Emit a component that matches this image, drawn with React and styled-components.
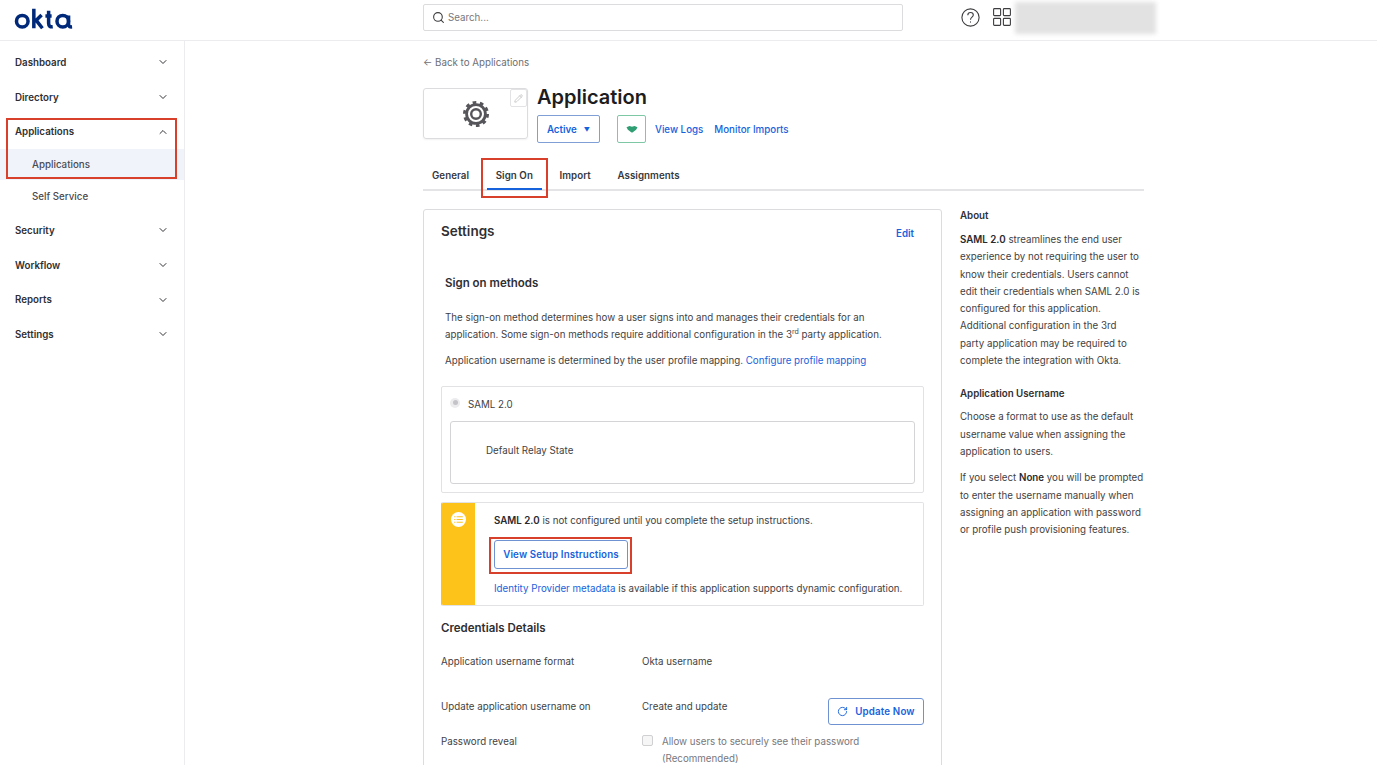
import styled, { createGlobalStyle } from "styled-components";
import { ChevronDown, ChevronUp, Search, Pencil, RotateCw } from "lucide-react";

const GlobalStyle = createGlobalStyle`
  html, body {
    margin: 0;
    height: 765px;
    overflow: hidden;
    background: #fff;
  }

  body {
    font-family: Inter, "Liberation Sans", sans-serif;
    font-size: 9.75px;
    color: #3f3f44;
  }
`;

const Page = styled.div`
  width: 1377px;
  height: 765px;
  overflow: hidden;
  display: flex;
  flex-direction: column;
`;

const TopBar = styled.header`
  flex: none;
  height: 40px;
  border-bottom: 1px solid #ececee;
  display: flex;
  align-items: center;
  position: relative;
`;

const LogoSlot = styled.div`
  width: 423px;
  padding: 0 0 3px 14px;
  box-sizing: border-box;
  display: flex;
  align-items: center;
`;

const SearchBox = styled.div`
  width: 480px;
  height: 27px;
  margin-bottom: 6px;
  box-sizing: border-box;
  border: 1px solid #dcdcdf;
  border-radius: 2px;
  padding: 0 8px;
  display: flex;
  align-items: center;
  gap: 3px;
  color: #77777c;
`;

const TopIcons = styled.div`
  display: flex;
  align-items: center;
  margin: 0 0 6px 58px;
  gap: 13px;
`;

const BlurredUser = styled.div`
  width: 141px;
  height: 32px;
  margin: 0 0 5px 4px;
  background: #e2e2e2;
  filter: blur(2px);
`;

const Body = styled.div`
  flex: 1;
  display: flex;
  min-height: 0;
`;

const Sidebar = styled.nav`
  flex: none;
  width: 184px;
  box-sizing: content-box;
  border-right: 1px solid #ececee;
  padding-top: 4px;
`;

const NavRow = styled.div`
  height: 34.7px;
  box-sizing: border-box;
  padding: 0 15px 0 15px;
  display: flex;
  align-items: center;
  justify-content: space-between;
  font-weight: 600;
  color: #2f2f33;

  svg {
    color: #333337;
  }
`;

const SubRow = styled.div`
  height: ${(p) => (p.$active ? "31px" : "33px")};
  display: flex;
  align-items: center;
  padding-left: 32px;
  color: #4a4a50;
  font-weight: 500;
  background: ${(p) => (p.$active ? "#f1f3fb" : "transparent")};
`;

const NavGroup = styled.div`
  position: relative;
`;

const Callout = styled.div`
  position: absolute;
  top: ${(p) => p.$top}px;
  left: ${(p) => p.$left}px;
  width: ${(p) => p.$width}px;
  height: ${(p) => p.$height}px;
  box-sizing: border-box;
  border: 2px solid #d9402b;
  pointer-events: none;
`;

const Main = styled.main`
  flex: none;
  width: 721px;
  margin-left: 238px;
  padding-top: 15px;
`;

const Back = styled.div`
  color: #6e6e73;
  line-height: 13px;
  height: 13px;
`;

const AppHeader = styled.div`
  margin-top: 19px;
  display: flex;
  gap: 9px;
`;

const AppLogo = styled.div`
  width: 105px;
  height: 51px;
  box-sizing: border-box;
  border: 1px solid #dcdcdf;
  border-radius: 3px;
  box-shadow: 0 1px 2px rgba(0, 0, 0, 0.06);
  display: flex;
  align-items: center;
  justify-content: center;
  position: relative;
`;

const EditBadge = styled.div`
  position: absolute;
  top: 0;
  right: 0;
  width: 17px;
  height: 18px;
  box-sizing: border-box;
  border: 1px solid #e3e3e5;
  border-radius: 2px;
  display: flex;
  align-items: center;
  justify-content: center;
  color: #bdbdc0;
`;

const AppTitle = styled.h1`
  margin: 0;
  font-size: 20px;
  line-height: 19px;
  font-weight: 600;
  color: #1d1d21;
`;

const AppActions = styled.div`
  margin-top: 8px;
  display: flex;
  align-items: center;
`;

const StatusButton = styled.div`
  width: 63px;
  height: 28px;
  box-sizing: border-box;
  border: 1px solid #7f9fd6;
  border-radius: 2px;
  color: #1662dd;
  font-weight: 600;
  display: flex;
  align-items: center;
  justify-content: center;
  gap: 7px;

  span {
    font-size: 6px;
  }
`;

const HandshakeButton = styled.div`
  width: 29px;
  height: 28px;
  margin: 0 9px 0 17px;
  box-sizing: border-box;
  border: 1px solid #7fc8a6;
  border-radius: 2px;
  display: flex;
  align-items: center;
  justify-content: center;
`;

const HeaderLink = styled.a`
  color: #1662dd;
  font-weight: 500;
  margin-right: 11px;
`;

const Tabs = styled.div`
  margin-top: 22px;
  height: 24px;
  border-bottom: 2px solid #e4e4e6;
  display: flex;
  padding-left: 9px;
  gap: 26.6px;
`;

const Tab = styled.div`
  position: relative;
  font-weight: 600;
  color: #38383c;
  line-height: 22px;
  letter-spacing: 0.05px;

  &::after {
    content: "";
    display: ${(p) => (p.$active ? "block" : "none")};
    position: absolute;
    left: -9px;
    right: -9px;
    bottom: -1px;
    height: 2px;
    background: #1662dd;
  }
`;

const Columns = styled.div`
  margin-top: 18px;
  display: flex;
  gap: 18px;
`;

const Card = styled.section`
  flex: none;
  width: 519px;
  height: 640px;
  box-sizing: border-box;
  border: 1px solid #dcdcdf;
  border-radius: 3px;
  padding: 12px 17px 0;
`;

const CardHead = styled.div`
  display: flex;
  justify-content: space-between;
  align-items: flex-start;
  padding-right: 10px;
`;

const CardTitle = styled.h2`
  margin: 0;
  font-size: 13.5px;
  line-height: 18px;
  font-weight: 600;
  color: #2f2f33;
`;

const EditLink = styled.a`
  margin-top: 6px;
  color: #1662dd;
  font-weight: 600;
`;

const Methods = styled.div`
  padding: 0 4px;
  margin-top: 35px;
`;

const SubTitle = styled.h3`
  margin: 0 0 18px;
  font-size: 11.5px;
  line-height: 16px;
  font-weight: 600;
  color: #2f2f33;
`;

const Para = styled.p`
  margin: 0 0 8px;
  line-height: 17.3px;
  color: #3f3f44;

  sup {
    font-size: 7px;
    line-height: 0;
  }
`;

const Link = styled.a`
  color: #1662dd;
`;

const RadioPanel = styled.div`
  margin-top: 17px;
  height: 107px;
  box-sizing: border-box;
  border: 1px solid #e2e2e4;
  border-radius: 2px;
  padding: 9px 8px;
`;

const RadioRow = styled.div`
  height: 18px;
  display: flex;
  align-items: center;
  gap: 8px;
`;

const RadioDot = styled.span`
  width: 10px;
  height: 10px;
  border-radius: 50%;
  background: #ececee;
  display: flex;
  align-items: center;
  justify-content: center;
  margin-bottom: 4px;

  &::after {
    content: "";
    width: 5px;
    height: 5px;
    border-radius: 50%;
    background: #c4c4c8;
  }
`;

const RelayBox = styled.div`
  margin-top: 7px;
  height: 63px;
  box-sizing: border-box;
  border: 1px solid #d4d4d7;
  border-radius: 3px;
  padding: 22px 35px;
  line-height: 14px;
`;

const Notice = styled.div`
  margin-top: 9px;
  height: 104px;
  box-sizing: border-box;
  border: 1px solid #e2e2e4;
  border-left: 1px solid #fec31b;
  border-radius: 2px;
  display: flex;
  overflow: hidden;
`;

const NoticeStripe = styled.div`
  flex: none;
  width: 33px;
  background: #fec31b;
  display: flex;
  justify-content: center;
  padding-top: 9px;
  box-sizing: border-box;
`;

const NoticeBody = styled.div`
  padding: 11px 0 0 19px;
  line-height: 14px;
  white-space: nowrap;

  strong {
    font-weight: 600;
    color: #2a2a2e;
  }
`;

const ButtonWrap = styled.div`
  position: relative;
  width: 134px;
  margin: 12px 0 13px;
`;

const OutlineButton = styled.div`
  height: ${(p) => p.$height || 29}px;
  box-sizing: border-box;
  border: 1px solid #6f93d2;
  border-radius: 3px;
  padding-top: 1px;
  color: #1662dd;
  font-weight: 600;
  letter-spacing: 0.15px;
  display: flex;
  align-items: center;
  justify-content: center;
  gap: 7px;
`;

const CredTitle = styled.h3`
  margin: 14px 0 0;
  font-size: 11.5px;
  line-height: 16px;
  font-weight: 600;
  color: #2f2f33;
`;

const DetailRow = styled.div`
  display: grid;
  grid-template-columns: 201px 1fr 96px;
  line-height: 17px;
  margin-top: ${(p) => p.$gap}px;
`;

const Muted = styled.div`
  grid-column: 2 / -1;
  display: flex;
  gap: 9px;
  color: #77777c;
`;

const CheckBox = styled.span`
  flex: none;
  width: 11px;
  height: 11px;
  margin-top: 2px;
  box-sizing: border-box;
  border: 1px solid #d0d0d3;
  border-radius: 2px;
  background: #f6f6f7;
`;

const Aside = styled.aside`
  flex: none;
  width: 184px;
  line-height: 17.3px;
  color: #3f3f44;
`;

const AsideTitle = styled.h4`
  margin: 0 0 ${(p) => p.$below}px;
  font-size: 9.75px;
  line-height: 13px;
  font-weight: 600;
  color: #2f2f33;
`;

const AsidePara = styled.p`
  margin: 0 0 9px;

  strong {
    font-weight: 600;
    color: #2a2a2e;
  }
`;

const AsideGap = styled.div`
  height: 9px;
`;

function OktaLogo() {
  return (
    <svg width="62" height="23" viewBox="0 0 60 22" role="img" aria-label="okta">
      <g fill="none" stroke="#00297a" strokeWidth="3.4">
        <circle cx="8" cy="13.6" r="5.6" />
        <path d="M19.2 1.5V20.4M20.3 13.8l6.4-6.3M21.7 13l5.8 7.4" />
        <path d="M33.5 3.5V15.5c0 3 1.6 3.8 4 3.5M30.4 8.6h6" />
        <circle cx="47.2" cy="13.6" r="5.6" />
        <path d="M52.8 8.2V16.5c0 2.2 1.2 2.8 3.4 2.6" />
      </g>
    </svg>
  );
}

function GearIcon() {
  return (
    <svg width="28" height="28" viewBox="0 0 28 28" fill="none" stroke="#55555a">
      <circle cx="14" cy="14" r="9.4" strokeWidth="2.8" />
      <circle cx="14" cy="14" r="11.6" strokeWidth="2.8" strokeDasharray="3.64 3.64" />
      <circle cx="14" cy="14" r="4.8" strokeWidth="2.4" />
    </svg>
  );
}

function HelpIcon() {
  return (
    <svg width="19" height="19" viewBox="0 0 19 19" fill="none" stroke="#3d3d40" strokeWidth="1.1">
      <circle cx="9.5" cy="9.5" r="8.6" />
      <path d="M6.8 7.2c0-1.7 1.2-2.7 2.8-2.7 1.6 0 2.7 1 2.7 2.4 0 2.2-2.8 2.2-2.8 4.8" />
      <path d="M9.5 13.4v1.2" />
    </svg>
  );
}

function GridIcon() {
  return (
    <svg width="18" height="18" viewBox="0 0 18 18" fill="none" stroke="#3d3d40" strokeWidth="1.1">
      <rect x="0.6" y="0.6" width="7" height="7" rx="0.8" />
      <rect x="10.4" y="0.6" width="7" height="7" rx="0.8" />
      <rect x="0.6" y="10.4" width="7" height="7" rx="0.8" />
      <rect x="10.4" y="10.4" width="7" height="7" rx="0.8" />
    </svg>
  );
}

function HandshakeIcon() {
  return (
    <svg width="12" height="7" viewBox="0 0 11 7">
      <path d="M0 1.2 3 0l2.5.8L8 0l3 1.2-1.4 2.6L6 6.6H5L1.4 3.8z" fill="#2f9e73" />
    </svg>
  );
}

function ListBadge() {
  return (
    <svg width="15" height="15" viewBox="0 0 15 15">
      <circle cx="7.5" cy="7.5" r="7.5" fill="#fff" />
      <path d="M3.2 4.8h1.2M5.6 4.8h6.2M3.2 7.5h1.2M5.6 7.5h6.2M3.2 10.2h1.2M5.6 10.2h6.2" stroke="#fec31b" strokeWidth="1.1" />
    </svg>
  );
}

const navAfter = ["Security", "Workflow", "Reports", "Settings"];

function App() {
  return (
    <Page>
      <GlobalStyle />
      <TopBar>
        <LogoSlot>
          <OktaLogo />
        </LogoSlot>
        <SearchBox>
          <Search size={13} color="#3d3d40" />
          Search...
        </SearchBox>
        <TopIcons>
          <HelpIcon />
          <GridIcon />
        </TopIcons>
        <BlurredUser />
      </TopBar>
      <Body>
        <Sidebar>
          <NavRow>
            Dashboard <ChevronDown size={12} />
          </NavRow>
          <NavRow>
            Directory <ChevronDown size={12} />
          </NavRow>
          <NavGroup>
            <NavRow>
              Applications <ChevronUp size={12} />
            </NavRow>
            <SubRow $active>Applications</SubRow>
            <Callout $top={4} $left={6} $width={171} $height={61} />
          </NavGroup>
          <SubRow>Self Service</SubRow>
          {navAfter.map((name) => (
            <NavRow key={name}>
              {name} <ChevronDown size={12} />
            </NavRow>
          ))}
        </Sidebar>
        <Main>
          <Back>← Back to Applications</Back>
          <AppHeader>
            <AppLogo>
              <GearIcon />
              <EditBadge>
                <Pencil size={9} />
              </EditBadge>
            </AppLogo>
            <div>
              <AppTitle>Application</AppTitle>
              <AppActions>
                <StatusButton>
                  Active <span>▼</span>
                </StatusButton>
                <HandshakeButton>
                  <HandshakeIcon />
                </HandshakeButton>
                <HeaderLink>View Logs</HeaderLink>
                <HeaderLink>Monitor Imports</HeaderLink>
              </AppActions>
            </div>
          </AppHeader>
          <Tabs>
            <Tab>General</Tab>
            <Tab $active>
              Sign On
              <Callout $top={-7} $left={-14.6} $width={67} $height={40} />
            </Tab>
            <Tab>Import</Tab>
            <Tab>Assignments</Tab>
          </Tabs>
          <Columns>
            <Card>
              <CardHead>
                <CardTitle>Settings</CardTitle>
                <EditLink>Edit</EditLink>
              </CardHead>
              <Methods>
                <SubTitle>Sign on methods</SubTitle>
                <Para>
                  The sign-on method determines how a user signs into and manages their credentials for an
                  <br />
                  application. Some sign-on methods require additional configuration in the 3<sup>rd</sup> party
                  application.
                </Para>
                <Para>
                  Application username is determined by the user profile mapping.{" "}
                  <Link>Configure profile mapping</Link>
                </Para>
              </Methods>
              <RadioPanel>
                <RadioRow>
                  <RadioDot />
                  SAML 2.0
                </RadioRow>
                <RelayBox>Default Relay State</RelayBox>
              </RadioPanel>
              <Notice>
                <NoticeStripe>
                  <ListBadge />
                </NoticeStripe>
                <NoticeBody>
                  <strong>SAML 2.0</strong> is not configured until you complete the setup instructions.
                  <ButtonWrap>
                    <OutlineButton>View Setup Instructions</OutlineButton>
                    <Callout $top={-3} $left={-5} $width={143} $height={37} />
                  </ButtonWrap>
                  <Link>Identity Provider metadata</Link> is available if this application supports dynamic
                  configuration.
                </NoticeBody>
              </Notice>
              <CredTitle>Credentials Details</CredTitle>
              <DetailRow $gap={17}>
                <div>Application username format</div>
                <div>Okta username</div>
              </DetailRow>
              <DetailRow $gap={28}>
                <div>Update application username on</div>
                <div>Create and update</div>
                <OutlineButton $height={27}>
                  <RotateCw size={11} color="#1662dd" />
                  Update Now
                </OutlineButton>
              </DetailRow>
              <DetailRow $gap={8}>
                <div>Password reveal</div>
                <Muted>
                  <CheckBox />
                  <div>
                    Allow users to securely see their password
                    <br />
                    (Recommended)
                  </div>
                </Muted>
              </DetailRow>
            </Card>
            <Aside>
              <AsideTitle $below={9}>About</AsideTitle>
              <AsidePara>
                <strong>SAML 2.0</strong> streamlines the end user experience by not requiring the user to
                know their credentials. Users cannot edit their credentials when SAML 2.0 is configured for
                this application. Additional configuration in the 3rd
                <br />
                party application may be required to complete the integration with Okta.
              </AsidePara>
              <AsideGap />
              <AsideTitle $below={8}>Application Username</AsideTitle>
              <AsidePara>
                Choose a format to use as the default username value when assigning the application to users.
              </AsidePara>
              <AsidePara>
                If you select <strong>None</strong> you will be prompted to enter the username manually when
                assigning an application with password or profile push provisioning features.
              </AsidePara>
            </Aside>
          </Columns>
        </Main>
      </Body>
    </Page>
  );
}

export default App;
